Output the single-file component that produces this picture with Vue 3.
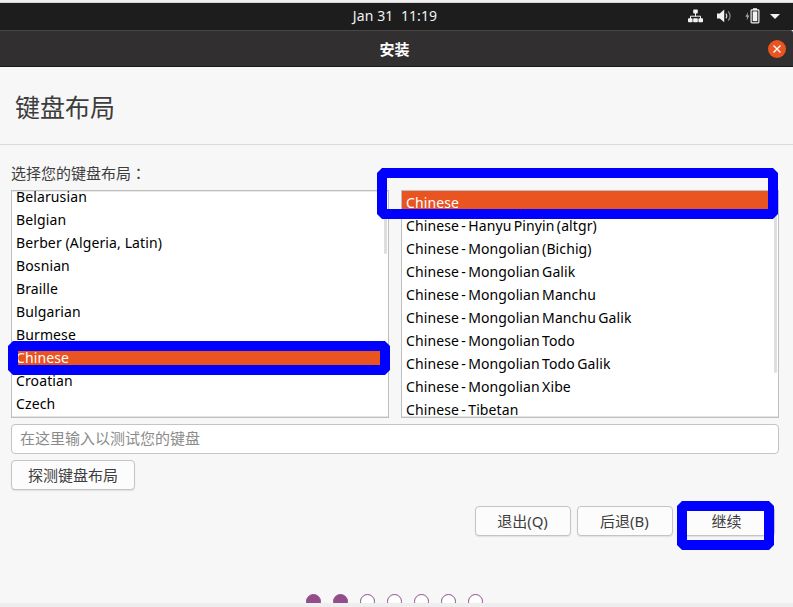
<script setup>
const languages = [
  'Belarusian', 'Belgian', 'Berber (Algeria, Latin)', 'Bosnian', 'Braille',
  'Bulgarian', 'Burmese', 'Chinese', 'Croatian', 'Czech'
]
const variants = [
  'Chinese', 'Chinese - Hanyu Pinyin (altgr)', 'Chinese - Mongolian (Bichig)',
  'Chinese - Mongolian Galik', 'Chinese - Mongolian Manchu',
  'Chinese - Mongolian Manchu Galik', 'Chinese - Mongolian Todo',
  'Chinese - Mongolian Todo Galik', 'Chinese - Mongolian Xibe', 'Chinese - Tibetan'
]
const steps = 7
const currentStep = 2
</script>

<template>
  <div class="screen">
    <div class="edge-top"></div>
    <div class="topbar">
      <span class="clock">Jan 31&nbsp; 11:19</span>
      <div class="tray">
        <svg class="net" width="15" height="14" viewBox="0 0 15 14">
          <path d="M7.5 4v3.5M2.5 10V7.2h10V10" fill="none" stroke="#f2f2f2" stroke-width="1" />
          <g fill="#f2f2f2">
            <rect x="5.2" y="0.5" width="4.6" height="4" rx="0.8" />
            <rect x="0" y="9.2" width="4.6" height="4" rx="0.8" />
            <rect x="5.2" y="9.2" width="4.6" height="4" rx="0.8" />
            <rect x="10.4" y="9.2" width="4.6" height="4" rx="0.8" />
          </g>
        </svg>
        <svg class="sound" width="16" height="14" viewBox="0 0 16 14">
          <path d="M0 4.5h2.8L7.2 0.5v12.8L2.8 9.5H0z" fill="#f2f2f2" />
          <path d="M9 4.7q1.6 2.3 0 4.6" fill="none" stroke="#ddd" stroke-width="1.2" />
          <path d="M11.2 2.3q3.8 4.7 0 9.4" fill="none" stroke="#888" stroke-width="1.2" />
        </svg>
        <svg class="battery" width="15" height="16" viewBox="0 0 15 16">
          <path d="M3 4L0.4 8.7h1.8L1.6 12.6L4.4 7.6H2.6z" fill="#aaa" />
          <path d="M8 0.2h4v2H8z" fill="#f2f2f2" />
          <rect x="6.1" y="1.8" width="7.8" height="13" rx="0.8" fill="none" stroke="#f2f2f2" stroke-width="1.2" />
          <rect x="7.7" y="3.4" width="4.6" height="9.8" fill="#f2f2f2" />
        </svg>
        <svg class="caret" width="10" height="5" viewBox="0 0 10 5">
          <path d="M0 0h10L5 5z" fill="#f2f2f2" />
        </svg>
      </div>
    </div>

    <div class="titlebar">
      <span class="title">安装</span>
      <button class="close" aria-label="Close">
        <svg width="18" height="18" viewBox="0 0 18 18">
          <path d="M5.5 5.5l7 7M12.5 5.5l-7 7" stroke="#fff" stroke-width="1.4" />
        </svg>
      </button>
    </div>

    <header class="heading"><h1>键盘布局</h1></header>

    <main class="content">
      <p class="prompt">选择您的键盘布局<span class="colon">：</span></p>
      <div class="lists">
        <div class="list languages">
          <ul>
            <li v-for="l in languages" :key="l" :class="{ selected: l === 'Chinese' }">{{ l }}</li>
          </ul>
          <i class="thumb"></i>
        </div>
        <div class="list variants">
          <ul>
            <li v-for="v in variants" :key="v" :class="{ selected: v === 'Chinese' }">{{ v }}</li>
          </ul>
          <i class="thumb"></i>
        </div>
      </div>
      <div class="entry">在这里输入以测试您的键盘</div>
      <button class="btn detect">探测键盘布局</button>
      <div class="actions">
        <button class="btn">退出(Q)</button>
        <button class="btn">后退(B)</button>
        <button class="btn">继续</button>
      </div>
    </main>

    <footer class="steps">
      <i v-for="n in steps" :key="n" :class="{ done: n <= currentStep }"></i>
    </footer>
    <div class="edge-bottom"></div>

    <div class="mark mark-variant"></div>
    <div class="mark mark-language"></div>
    <div class="mark mark-continue"></div>
  </div>
</template>

<style>
body { margin: 0; overflow: hidden; }
</style>

<style scoped>
* { box-sizing: border-box; }
.screen {
  position: relative;
  display: flex;
  flex-direction: column;
  width: 793px;
  height: 607px;
  overflow: hidden;
  background: #f7f7f7;
  color: #3d3d3d;
  font-family: "Noto Sans", "Noto Sans CJK SC", sans-serif;
  font-size: 15px;
}
.edge-top { height: 3px; flex: none; background: #f0f0f0; border-bottom: 1px solid #d5d5d5; }
.topbar {
  flex: none;
  height: 27px;
  display: grid;
  grid-template-columns: 1fr auto 1fr;
  align-items: center;
  background: #1d1d1d;
  color: #f2f2f2;
}
.clock { grid-column: 2; padding: 0 3px 2px 0; font-size: 14px; line-height: 25px; letter-spacing: 0.1px; }
.tray { display: flex; justify-content: flex-end; align-items: center; padding: 0 13px 1px 0; }
.sound { margin-left: 14px; }
.battery { margin-left: 12px; }
.caret { margin-left: 10px; }
.titlebar {
  flex: none;
  height: 37px;
  display: grid;
  grid-template-columns: 1fr auto 1fr;
  align-items: center;
  background: #322f30;
  border-top: 1px solid #474545;
  border-bottom: 1px solid #1b191a;
  border-radius: 0 3px 0 0;
  color: #fff;
}
.title { grid-column: 2; padding-right: 4px; font-weight: 700; line-height: 35px; padding-top: 1px; }
.close {
  justify-self: end;
  width: 18px;
  height: 18px;
  margin: 0 7px 1px 0;
  padding: 0;
  border: 0;
  border-radius: 50%;
  background: #e95420;
}
.close svg { display: block; }
.heading { flex: none; height: 78px; padding: 22px 15px 0; border-bottom: 1px solid #dcdcdc; }
h1 { margin: 0; font-size: 25px; line-height: 36px; font-weight: 400; }
.content { flex: none; height: 449px; padding: 17px 14px 0 11px; }
.prompt { margin: 0; height: 28px; line-height: 22px; }
.colon { font-family: "Noto Sans CJK TC", sans-serif; }
.lists { display: flex; gap: 12px; }
.list {
  position: relative;
  width: 378px;
  height: 228px;
  border: 1px solid #bfbfbf;
  background: #fff;
  box-shadow: inset 0 -1px #e5e5e5, inset 0 1px #e8e8e8;
  overflow: hidden;
}
ul { margin: 0; padding: 0; list-style: none; }
.languages ul { margin-top: -6px; letter-spacing: 0.12px; }
.variants ul { letter-spacing: 0.1px; word-spacing: -1.4px; }
li { height: 23px; padding-left: 4px; line-height: 23px; font-size: 14px; color: #000; white-space: pre; }
.selected { background: #e95420; color: #fff; }
.thumb { position: absolute; right: 1px; width: 3px; background: #dedede; border-radius: 0 0 2px 2px; }
.languages .thumb { top: 0; height: 63px; }
.variants .thumb { top: 0; height: 182px; }
.entry {
  width: 768px;
  height: 30px;
  margin-top: 6px;
  padding-left: 8px;
  border: 1px solid #c4c4c4;
  border-radius: 4px;
  background: #fff;
  color: #8b8b8b;
  line-height: 27px;
}
.btn {
  height: 30px;
  width: 96px;
  padding: 0 1px 0 0;
  border: 1px solid #c4c4c4;
  border-radius: 4px;
  background: #fcfcfc;
  box-shadow: 0 1px 1px #e0e0e0;
  color: #3d3d3d;
  font: inherit;
  line-height: 26px;
}
.detect { display: block; width: 124px; margin-top: 6px; padding-right: 0; }
.actions { display: flex; justify-content: flex-end; gap: 6px; margin: 16px -6px 0 0; padding-right: 10px; }
.steps { flex: none; display: flex; gap: 12px; height: 9px; padding-left: 306px; overflow: hidden; }
.steps i { flex: none; width: 15px; height: 15px; border: 1px solid #924d8b; border-radius: 50%; background: #fff; }
.steps .done { background: #924d8b; }
.edge-bottom { flex: none; height: 4px; background: #eee; }
.mark {
  position: absolute;
  border: 10px solid #00f;
  clip-path: polygon(5px 0, calc(100% - 5px) 0, 100% 5px, 100% calc(100% - 5px), calc(100% - 5px) 100%, 5px 100%, 0 calc(100% - 5px), 0 5px);
}
.mark-variant { left: 377px; top: 168px; width: 401px; height: 51px; }
.mark-language { left: 8px; top: 341px; width: 382px; height: 34px; }
.mark-continue { left: 677px; top: 501px; width: 97px; height: 49px; }
</style>
